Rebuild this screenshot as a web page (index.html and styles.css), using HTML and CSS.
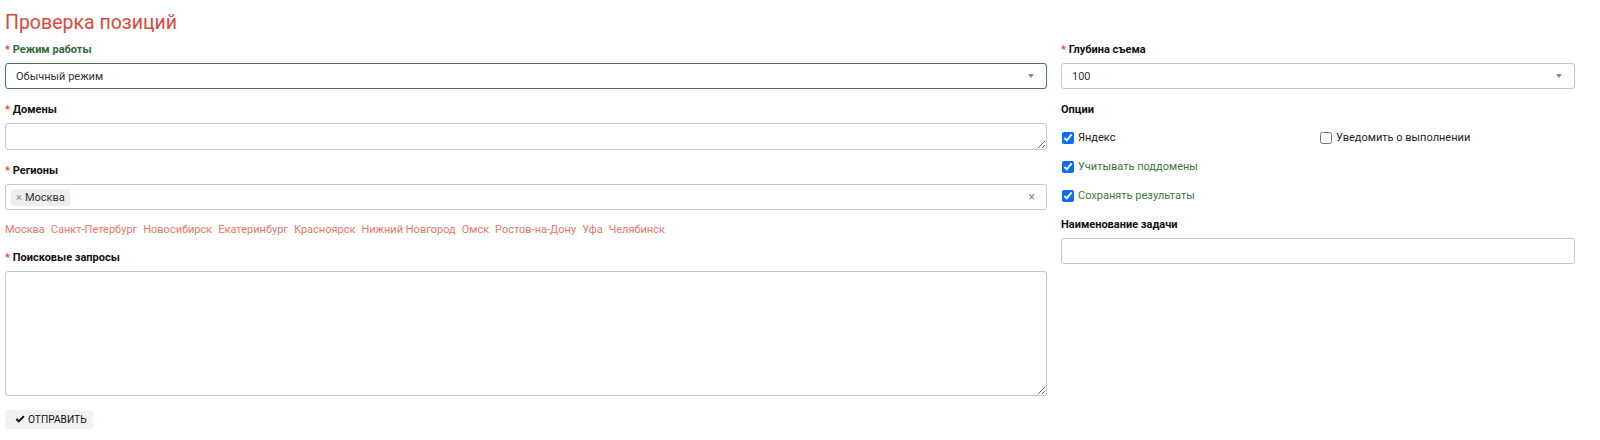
FILE: index.html
```
<!DOCTYPE html>
<html lang="ru">
<head>
  <meta charset="UTF-8">
  <meta name="viewport" content="width=device-width, initial-scale=1.0">
  <title>Проверка позиций</title>
  <link rel="stylesheet" href="styles.css">
</head>
<body>

<h1 class="title">Проверка позиций</h1>

<form class="form">
  <div class="col-left">
    <div class="group ok">
      <label class="label"><span class="req">*</span> Режим работы</label>
      <div class="select ok-box">
        <span class="value">Обычный режим</span>
        <span class="arrow"></span>
      </div>
    </div>

    <div class="group">
      <label class="label"><span class="req">*</span> Домены</label>
      <textarea class="input area-small"></textarea>
    </div>

    <div class="group">
      <label class="label"><span class="req">*</span> Регионы</label>
      <div class="select multi">
        <span class="tag"><span class="tag-x">×</span>Москва</span>
        <span class="clear">×</span>
      </div>
      <div class="quick">
        <a>Москва</a>
        <a>Санкт-Петербург</a>
        <a>Новосибирск</a>
        <a>Екатеринбург</a>
        <a>Красноярск</a>
        <a>Нижний Новгород</a>
        <a>Омск</a>
        <a>Ростов-на-Дону</a>
        <a>Уфа</a>
        <a>Челябинск</a>
      </div>
    </div>

    <div class="group">
      <label class="label"><span class="req">*</span> Поисковые запросы</label>
      <textarea class="input area-big"></textarea>
    </div>

    <button type="button" class="send">
      <svg width="10" height="9" viewBox="0 0 10 9"><path d="M0.6 4.8 L2.2 3.3 L3.8 5 L8.2 0.4 L9.6 1.8 L3.8 7.8 Z" fill="#111"/></svg>
      ОТПРАВИТЬ
    </button>
  </div>

  <div class="col-right">
    <div class="group">
      <label class="label"><span class="req">*</span> Глубина съема</label>
      <div class="select">
        <span class="value">100</span>
        <span class="arrow"></span>
      </div>
    </div>

    <div class="group">
      <label class="label">Опции</label>
      <div class="options">
        <label class="check"><input type="checkbox" checked> Яндекс</label>
        <label class="check"><input type="checkbox"> Уведомить о выполнении</label>
        <label class="check green"><input type="checkbox" checked> Учитывать поддомены</label>
        <span></span>
        <label class="check green"><input type="checkbox" checked> Сохранять результаты</label>
      </div>
    </div>

    <div class="group">
      <label class="label">Наименование задачи</label>
      <input type="text" class="input">
    </div>
  </div>
</form>

</body>
</html>
```

FILE: styles.css
```
* {
  margin: 0;
  padding: 0;
  box-sizing: border-box;
}

body {
  font-family: Roboto, "Liberation Sans", sans-serif;
  font-size: 11px;
  color: #333;
  background: #fff;
  padding: 0 5px;
}

.title {
  font-size: 19.5px;
  font-weight: 400;
  line-height: 24px;
  color: #e0473a;
  margin-top: 11px;
}

.form {
  display: flex;
  gap: 14px;
  margin-top: 8px;
}

.col-left {
  flex: none;
  width: 1042px;
}

.col-right {
  flex: none;
  width: 514px;
}

.group {
  margin-bottom: 14px;
}

.label {
  display: block;
  font-weight: 700;
  line-height: 14px;
  color: #111;
  margin-bottom: 6px;
}

.ok .label {
  color: #2f6b3a;
}

.req {
  color: #e0473a;
}

.select, .input {
  display: block;
  width: 100%;
  height: 26px;
  border: 1px solid #c8c8c8;
  border-radius: 3px;
  background: #fff;
  font-family: inherit;
  font-size: 11px;
  color: #333;
}

.select {
  display: flex;
  align-items: center;
  padding: 0 10px;
  position: relative;
}

.ok-box {
  border-color: #4a7550;
}

.value {
  flex: 1;
}

.arrow {
  width: 0;
  height: 0;
  border-left: 3.5px solid transparent;
  border-right: 3.5px solid transparent;
  border-top: 4px solid #888;
  margin-right: 2px;
}

.area-small {
  height: 27px;
  resize: vertical;
}

.area-big {
  height: 125px;
  resize: vertical;
}

.multi {
  padding: 0 5px;
}

.tag {
  display: inline-flex;
  align-items: center;
  background: #ededed;
  border-radius: 4px;
  height: 17px;
  padding: 0 5px;
  margin-right: auto;
  color: #333;
  font-size: 11px;
}

.tag-x {
  color: #888;
  margin-right: 3px;
  font-size: 11px;
}

.clear {
  color: #888;
  font-size: 12px;
  margin-right: 6px;
}

.quick {
  display: flex;
  gap: 6px;
  line-height: 14px;
  margin-top: 13px;
  margin-bottom: 13px;
}

.quick a {
  color: #e8776b;
  cursor: pointer;
}

.send {
  display: flex;
  align-items: center;
  gap: 3px;
  height: 19px;
  padding: 0 6px 0 10px;
  background: #f2f2f2;
  border: none;
  border-radius: 3px;
  font-family: inherit;
  font-size: 10.2px;
  color: #111;
}

.options {
  display: grid;
  grid-template-columns: 258px 258px;
  row-gap: 15px;
  margin-top: 14px;
  margin-bottom: 15px;
}

.check {
  display: flex;
  align-items: center;
  gap: 4px;
  line-height: 14px;
  color: #222;
  font-size: 11px;
}

.check input {
  width: 12px;
  height: 12px;
  margin: 0 0 0 1px;
  accent-color: #0a6cff;
}

.green {
  color: #3c763d;
}
```
